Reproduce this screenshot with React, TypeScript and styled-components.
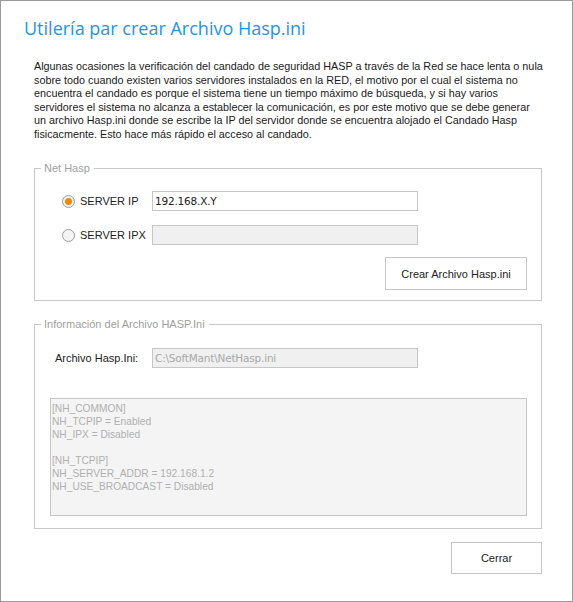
import React from "react";
import styled, { createGlobalStyle } from "styled-components";

const GlobalStyle = createGlobalStyle`
  html, body {
    margin: 0;
    padding: 0;
    background: #ffffff;
  }
  * {
    box-sizing: border-box;
  }
`;

const Window = styled.div`
  width: 573px;
  height: 602px;
  border: 1px solid #9a9a9a;
  background: #ffffff;
  display: flex;
  flex-direction: column;
  font-family: "Liberation Sans", Arial, sans-serif;
  font-size: 11px;
  color: #222;
`;

const Title = styled.h1`
  margin: 0;
  padding: 15px 0 0 23px;
  font-family: "Open Sans", "Noto Sans", sans-serif;
  font-weight: 400;
  font-size: 18px;
  line-height: 24px;
  color: #1e96e6;
`;

const Body = styled.div`
  padding: 20px 30px 0 33px;
  display: flex;
  flex-direction: column;
`;

const Description = styled.p`
  margin: 0;
  font-size: 10.8px;
  line-height: 13.5px;
  white-space: nowrap;
  color: #1a1a1a;
`;

const Group = styled.fieldset<{ $top: number }>`
  margin: ${(p) => p.$top}px 0 0 0;
  padding: 0;
  border: 1px solid #c8c8c8;
  min-width: 0;
`;

const GroupInner = styled.div<{ $pad: string }>`
  padding: ${(p) => p.$pad};
`;

const Legend = styled.legend`
  padding: 0 4px 0 3px;
  margin-left: 6px;
  color: #a0a0a0;
  line-height: 13px;
`;

const FieldGrid = styled.div`
  display: grid;
  grid-template-columns: 90px 266px;
  align-items: center;
  row-gap: 14px;
`;

const RadioLabel = styled.label`
  display: flex;
  align-items: center;
  gap: 5px;
  color: #222;
`;

const RadioDot = styled.span<{ $checked?: boolean }>`
  width: 13px;
  height: 13px;
  border-radius: 50%;
  border: 1px solid #9c9c9c;
  background: #f4f4f4;
  display: flex;
  align-items: center;
  justify-content: center;
  &::after {
    content: "";
    width: 7px;
    height: 7px;
    border-radius: 50%;
    background: ${(p) => (p.$checked ? "#f08a00" : "transparent")};
  }
`;

const TextInput = styled.div<{ $disabled?: boolean }>`
  height: 20px;
  border: 1px solid #c6c6c6;
  background: ${(p) => (p.$disabled ? "#f0f0f0" : "#ffffff")};
  color: ${(p) => (p.$disabled ? "#a8a8a8" : "#222")};
  padding: 0 2px;
  display: flex;
  align-items: center;
  font-family: "DejaVu Sans", sans-serif;
  font-size: 10.5px;
  letter-spacing: -0.2px;
`;

const Actions = styled.div`
  display: flex;
  justify-content: flex-end;
  margin-top: 12px;
`;

const Button = styled.button<{ $w: number; $h: number }>`
  width: ${(p) => p.$w}px;
  height: ${(p) => p.$h}px;
  border: 1px solid #c6c6c6;
  background: #ffffff;
  font-family: "Liberation Sans", Arial, sans-serif;
  font-size: 11px;
  color: #222;
  padding: 0;
`;

const FileRow = styled.div`
  display: grid;
  grid-template-columns: 102px 266px;
  align-items: center;
`;

const FieldLabel = styled.span`
  padding-left: 5px;
  color: #222;
`;

const IniBox = styled.pre`
  margin: 30px 0 0 0;
  height: 118px;
  border: 1px solid #c6c6c6;
  background: #f4f4f4;
  color: #b0b0b0;
  padding: 3px 1px;
  font-family: "Liberation Sans", Arial, sans-serif;
  font-size: 10.2px;
  line-height: 13px;
`;

const Footer = styled.div`
  display: flex;
  justify-content: flex-end;
  padding: 13px 30px 0 0;
`;

const descLines = [
  "Algunas ocasiones la verificación del candado de seguridad HASP a través de la Red se hace lenta o nula",
  "sobre todo cuando existen varios servidores instalados en la RED, el motivo por el cual el sistema no",
  "encuentra el candado es porque el sistema tiene un tiempo máximo de búsqueda, y si hay varios",
  "servidores el sistema no alcanza a establecer la comunicación, es por este motivo que se debe generar",
  "un archivo Hasp.ini donde se escribe la IP del servidor donde se encuentra alojado el Candado Hasp",
  "fisicacmente. Esto hace más rápido el acceso  al candado.",
];

const iniText = `[NH_COMMON]
NH_TCPIP = Enabled
NH_IPX = Disabled

[NH_TCPIP]
NH_SERVER_ADDR = 192.168.1.2
NH_USE_BROADCAST = Disabled`;

export default function App() {
  return (
    <>
      <GlobalStyle />
      <Window>
        <Title>Utilería par crear Archivo Hasp.ini</Title>
        <Body>
          <Description>
            {descLines.map((line, i) => (
              <React.Fragment key={i}>
                {line}
                {i < descLines.length - 1 && <br />}
              </React.Fragment>
            ))}
          </Description>

          <Group $top={21}>
            <Legend>Net Hasp</Legend>
            <GroupInner $pad="16px 14px 10px 27px">
              <FieldGrid>
                <RadioLabel>
                  <RadioDot $checked />
                  SERVER IP
                </RadioLabel>
                <TextInput>192.168.X.Y</TextInput>
                <RadioLabel>
                  <RadioDot />
                  SERVER IPX
                </RadioLabel>
                <TextInput $disabled />
              </FieldGrid>
              <Actions>
                <Button $w={142} $h={33}>Crear Archivo Hasp.ini</Button>
              </Actions>
            </GroupInner>
          </Group>

          <Group $top={17}>
            <Legend>Información del Archivo HASP.Ini</Legend>
            <GroupInner $pad="17px 14px 12px 15px">
              <FileRow>
                <FieldLabel>Archivo Hasp.Ini:</FieldLabel>
                <TextInput $disabled>C:\SoftMant\NetHasp.ini</TextInput>
              </FileRow>
              <IniBox>{iniText}</IniBox>
            </GroupInner>
          </Group>
        </Body>
        <Footer>
          <Button $w={91} $h={32}>Cerrar</Button>
        </Footer>
      </Window>
    </>
  );
}
